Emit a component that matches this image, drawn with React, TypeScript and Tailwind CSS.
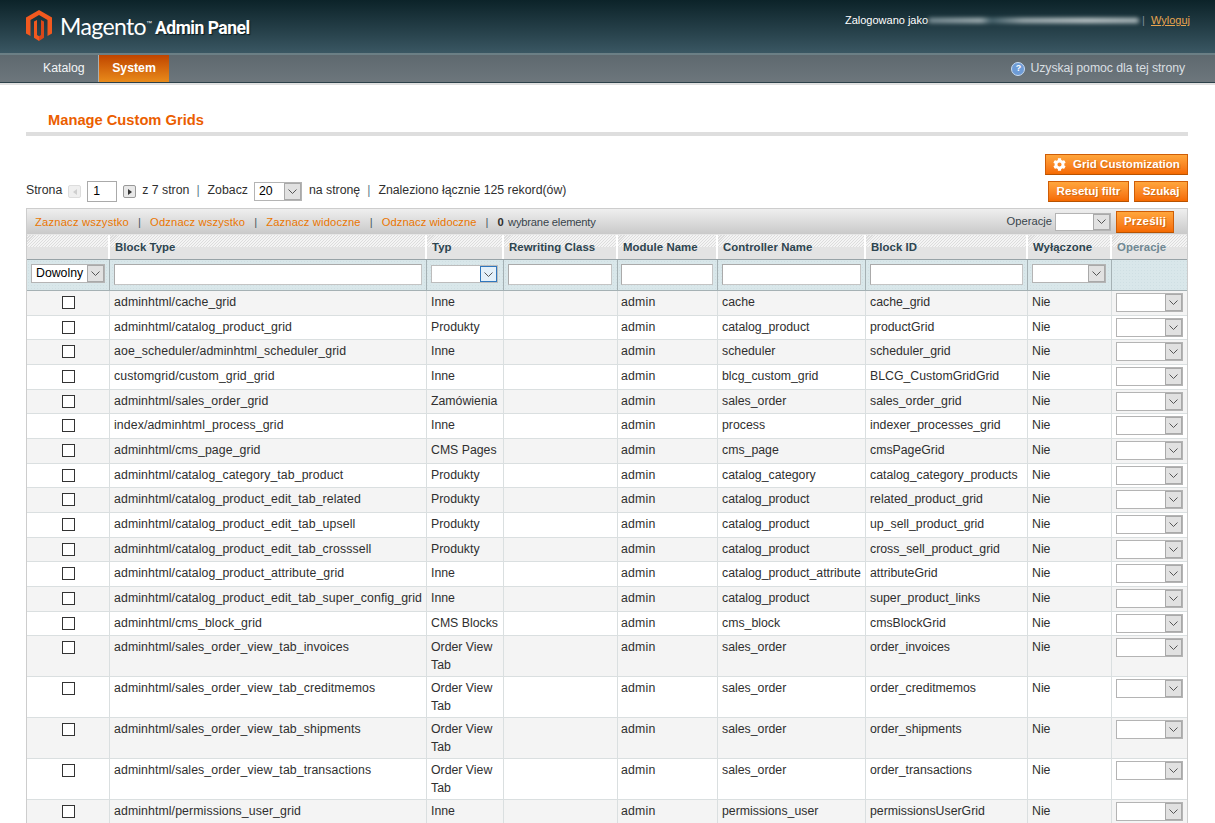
import React from "react";
import { FaCog } from "react-icons/fa";

const COLS = "grid grid-cols-[83px_317px_77px_114px_100px_148px_162px_84px_75px]";

const rows: [string, string, string, string, string][] = [
  ["adminhtml/cache_grid", "Inne", "cache", "cache_grid", "admin"],
  ["adminhtml/catalog_product_grid", "Produkty", "catalog_product", "productGrid", "admin"],
  ["aoe_scheduler/adminhtml_scheduler_grid", "Inne", "scheduler", "scheduler_grid", "admin"],
  ["customgrid/custom_grid_grid", "Inne", "blcg_custom_grid", "BLCG_CustomGridGrid", "admin"],
  ["adminhtml/sales_order_grid", "Zamówienia", "sales_order", "sales_order_grid", "admin"],
  ["index/adminhtml_process_grid", "Inne", "process", "indexer_processes_grid", "admin"],
  ["adminhtml/cms_page_grid", "CMS Pages", "cms_page", "cmsPageGrid", "admin"],
  ["adminhtml/catalog_category_tab_product", "Produkty", "catalog_category", "catalog_category_products", "admin"],
  ["adminhtml/catalog_product_edit_tab_related", "Produkty", "catalog_product", "related_product_grid", "admin"],
  ["adminhtml/catalog_product_edit_tab_upsell", "Produkty", "catalog_product", "up_sell_product_grid", "admin"],
  ["adminhtml/catalog_product_edit_tab_crosssell", "Produkty", "catalog_product", "cross_sell_product_grid", "admin"],
  ["adminhtml/catalog_product_attribute_grid", "Inne", "catalog_product_attribute", "attributeGrid", "admin"],
  ["adminhtml/catalog_product_edit_tab_super_config_grid", "Inne", "catalog_product", "super_product_links", "admin"],
  ["adminhtml/cms_block_grid", "CMS Blocks", "cms_block", "cmsBlockGrid", "admin"],
  ["adminhtml/sales_order_view_tab_invoices", "Order View Tab", "sales_order", "order_invoices", "admin"],
  ["adminhtml/sales_order_view_tab_creditmemos", "Order View Tab", "sales_order", "order_creditmemos", "admin"],
  ["adminhtml/sales_order_view_tab_shipments", "Order View Tab", "sales_order", "order_shipments", "admin"],
  ["adminhtml/sales_order_view_tab_transactions", "Order View Tab", "sales_order", "order_transactions", "admin"],
  ["adminhtml/permissions_user_grid", "Inne", "permissions_user", "permissionsUserGrid", "admin"],
];

function Chevron() {
  return (
    <svg width="9" height="5" viewBox="0 0 9 5" fill="none">
      <path d="M0.5 0.5 L4.5 4.5 L8.5 0.5" stroke="#555" strokeWidth="1" />
    </svg>
  );
}

function Select({ className, value, focus }: { className: string; value?: string; focus?: boolean }) {
  return (
    <div className={`flex bg-white border ${focus ? "border-[#bcbcbc]" : "border-[#b4b4b4]"} ${className}`}>
      <div className="flex-1 min-w-0 pl-[4px] text-[12.3px] text-black flex items-center overflow-hidden">{value}</div>
      <div
        className={
          focus
            ? "w-[17px] shrink-0 flex items-center justify-center bg-[#e4f0f9] border border-[#2f77bd]"
            : "w-[17px] shrink-0 flex items-center justify-center bg-[#e1e1e1] border border-[#a9a9a9]"
        }
      >
        <Chevron />
      </div>
    </div>
  );
}

function Btn({ className, children }: { className: string; children: React.ReactNode }) {
  return (
    <div
      className={`flex items-center justify-center pb-[1px] bg-gradient-to-b from-[#ffa63c] to-[#f56a00] border border-[#cf5d06] border-b-[#b85200] text-white font-bold text-[11.6px] [text-shadow:1px_1px_0_#d66a10] ${className}`}
    >
      {children}
    </div>
  );
}

function Sep() {
  return <span className="text-[#5d7d8c]">|</span>;
}

function HCell({ children, last, muted }: { children?: React.ReactNode; last?: boolean; muted?: boolean }) {
  return (
    <div
      className={`h-full pl-[5px] pt-[1px] flex items-center font-bold text-[11.4px] tracking-[0.05px] ${muted ? "text-[#6f8792]" : "text-[#2d444f]"} ${last ? "" : "border-r-2 border-white"} bg-[#e3e3e3] bg-[repeating-linear-gradient(135deg,#dcdcdc_0,#dcdcdc_0.71px,#f4f4f4_0.71px,#f4f4f4_2.12px)] bg-[length:100%_12px] bg-no-repeat`}
    >
      {children}
    </div>
  );
}

function FCell({ children, last }: { children?: React.ReactNode; last?: boolean }) {
  return <div className={`h-full relative flex items-start ${last ? "" : "border-r border-[#a5b1b4]"}`}>{children}</div>;
}

function Input({ className }: { className: string }) {
  return <div className={`bg-white border border-[#aaaaaa] border-b-[#c4c4c4] border-r-[#c4c4c4] h-[21px] mt-[4px] ${className}`} />;
}

function Row({ r, i }: { r: (typeof rows)[number]; i: number }) {
  const tall = r[1] === "Order View Tab";
  const cell = "h-full border-r border-[#dadfe0] pl-[4px] pt-[2px] text-[12.3px] leading-[18px] text-[#2f2f2f] overflow-hidden";
  return (
    <div className={`${COLS} border-b border-[#dadfe0] ${tall ? "h-[41px]" : "h-[24.67px]"} ${i % 2 === 0 ? "bg-[#f4f4f4]" : "bg-white"}`}>
      <div className="h-full border-r border-[#dadfe0] flex justify-center pt-[5px]">
        <div className="w-[13px] h-[13px] bg-white border border-[#333333]" />
      </div>
      <div className={`${cell} whitespace-nowrap tracking-[0.1px]`}>{r[0]}</div>
      <div className={`${cell} ${tall ? "whitespace-normal" : "whitespace-nowrap"}`}>{r[1]}</div>
      <div className={cell} />
      <div className={`${cell} whitespace-nowrap tracking-[0.2px] !pl-[3px]`}>{r[4]}</div>
      <div className={`${cell} whitespace-nowrap`}>{r[2]}</div>
      <div className={`${cell} whitespace-nowrap`}>{r[3]}</div>
      <div className={`${cell} whitespace-nowrap`}>Nie</div>
      <div className="h-full pl-[4px] pt-[2px]">
        <Select className="w-[67px] h-[19px]" />
      </div>
    </div>
  );
}

export default function App() {
  return (
    <div className="h-screen overflow-hidden bg-white font-['Liberation_Sans',Arial,sans-serif] text-[12.3px] text-[#2f2f2f]">
      {/* header */}
      <div className="h-[53px] bg-gradient-to-b from-[#0c2329] to-[#3a5763] relative flex items-start pl-[26px] pr-[25px]">
        <svg className="mt-[10px] shrink-0" width="26" height="31" viewBox="0 0 26 31">
          <path d="M13 0 L26 7.5 V23.5 L21.5 26 V10 L13 5 L4.5 10 V26 L0 23.5 V7.5 Z" fill="#f2591f" />
          <path d="M8 11.5 L11 10 V25 L13 26.3 V31 L8 27.8 Z" fill="#f2591f" />
          <path d="M18 11.5 L15 10 V25 L13 26.3 V31 L18 27.8 Z" fill="#d9471a" />
        </svg>
        <div className="ml-[8px] mt-[10px] text-white font-['Lato',sans-serif] font-normal text-[23px] leading-[32px] tracking-[-0.6px]">Magento</div>
        <div className="text-white text-[6px] mt-[20px] leading-none">™</div>
        <div className="ml-[3px] mt-[16px] text-white font-['Roboto',sans-serif] font-bold text-[17.5px] leading-[24px] tracking-[-0.5px] [text-shadow:1px_1px_1px_#0a1a1f] whitespace-nowrap">Admin Panel</div>
        <div className="ml-auto mt-[14px] flex items-center text-[11px] leading-[13px] text-white whitespace-nowrap">
          <span>Zalogowano jako</span>
          <div className="w-[211px] h-[5px] rounded-full blur-[2px] bg-[linear-gradient(90deg,#7f939a,#aebbbf_25%,#4a6670_30%,#a9b6ba_45%,#ccd4d6_75%,#b4c0c3)]" />
          <span className="text-[#7f9098] ml-[3px] mr-[6px]">|</span>
          <span className="text-[#e9a54f] underline">Wyloguj</span>
        </div>
      </div>
      {/* nav */}
      <div className="h-[2px] bg-[#6b7f85]" />
      <div className="h-[27px] bg-gradient-to-b from-[#5e696f] to-[#6d767c] flex items-stretch pl-[43px] pr-[30px]">
        <div className="w-[56px] flex items-center text-[#f2f4f5] text-[12.3px] border-r border-[#a9b0b3]">Katalog</div>
        <div className="w-[70px] flex items-center justify-center text-white font-bold bg-gradient-to-b from-[#bf4400] to-[#e98a1a]">System</div>
        <div className="ml-auto flex items-center text-[#d9dfe2] tracking-[-0.07px]">
          <div className="w-[14px] h-[14px] rounded-full bg-[#6d9bd6] border border-[#c9dcf2] text-white text-[9px] font-bold flex items-center justify-center mr-[5px]">?</div>
          <span>Uzyskaj pomoc dla tej strony</span>
        </div>
      </div>
      <div className="h-[1px] bg-[#2c4049]" />
      <div className="h-[2px] bg-[#e0e0e0]" />

      {/* content */}
      <div className="pl-[26px] pr-[27px]">
        <div className="h-[51px] pt-[27px] border-b-[4px] border-[#dedede] pl-[22px] font-bold text-[14.7px] leading-[17px] text-[#eb5e00]">
          Manage Custom Grids
        </div>
        <div className="flex justify-end mt-[18px]">
          <Btn className="w-[143px] h-[21px]">
            <FaCog className="text-white text-[13px] mr-[7px]" />
            Grid Customization
          </Btn>
        </div>
        <div className="flex items-center mt-[6px] h-[21px] text-[12.3px] whitespace-nowrap">
          <span className="-mt-[2px]">Strona</span>
          <div className="ml-[6px] w-[13px] h-[13px] bg-[#efefef] border border-[#dddddd] rounded-[2px] flex items-center justify-center">
            <div className="w-0 h-0 border-y-[3px] border-y-transparent border-r-[4px] border-r-[#cfcfcf]" />
          </div>
          <div className="ml-[6px] w-[30px] h-[21px] border border-[#aaaaaa] pl-[5px] flex items-center text-black">1</div>
          <div className="ml-[6px] w-[13px] h-[13px] bg-[#e8e8e8] border border-[#999999] rounded-[2px] flex items-center justify-center">
            <div className="w-0 h-0 border-y-[3px] border-y-transparent border-l-[4px] border-l-[#333333]" />
          </div>
          <span className="ml-[6px] -mt-[2px]">z 7 stron</span>
          <span className="ml-[7px] -mt-[2px]"><Sep /></span>
          <span className="ml-[8px] -mt-[2px]">Zobacz</span>
          <Select className="ml-[6px] w-[48px] h-[19px] border-[#aaaaaa]" value="20" />
          <span className="ml-[7px] -mt-[2px]">na stronę</span>
          <span className="ml-[7px] -mt-[2px]"><Sep /></span>
          <span className="ml-[8px] -mt-[2px]">Znaleziono łącznie 125 rekord(ów)</span>
          <Btn className="ml-auto w-[81px] h-[21px]">Resetuj filtr</Btn>
          <Btn className="ml-[5px] w-[54px] h-[21px]">Szukaj</Btn>
        </div>

        {/* grid */}
        <div className="mt-[6px] border border-[#cdcdcd] border-b-0">
          <div className="h-[26px] bg-gradient-to-b from-[#efefef] to-[#c9c9c9] flex items-center pl-[8px] pr-[13px] text-[11.2px] tracking-[0.2px] whitespace-nowrap border-b border-[#e6e6e6]">
            <span className="text-[#ea7601] pt-[2px]">Zaznacz wszystko</span>
            <span className="mx-[9px] text-[#4a5a63] pt-[2px]">|</span>
            <span className="text-[#ea7601] pt-[2px] tracking-[0.15px]">Odznacz wszystko</span>
            <span className="mx-[9px] text-[#4a5a63] pt-[2px]">|</span>
            <span className="text-[#ea7601] pt-[2px] tracking-[0.15px]">Zaznacz widoczne</span>
            <span className="mx-[9px] text-[#4a5a63] pt-[2px]">|</span>
            <span className="text-[#ea7601] pt-[2px] tracking-[0.05px]">Odznacz widoczne</span>
            <span className="mx-[9px] text-[#4a5a63] pt-[2px]">|</span>
            <span className="font-bold mr-[4px] pt-[2px]">0</span>
            <span className="text-[#38444b] tracking-[-0.2px] pt-[2px]">wybrane elementy</span>
            <span className="ml-auto text-[#38444b] tracking-[0px]">Operacje</span>
            <Select className="ml-[3px] w-[56px] h-[18px]" />
            <Btn className="ml-[5px] w-[58px] h-[22px]">Prześlij</Btn>
          </div>
          <div className={`${COLS} h-[25px] border-b border-[#98a3a7]`}>
            <HCell />
            <HCell>Block Type</HCell>
            <HCell>Typ</HCell>
            <HCell>Rewriting Class</HCell>
            <HCell>Module Name</HCell>
            <HCell>Controller Name</HCell>
            <HCell>Block ID</HCell>
            <HCell>Wyłączone</HCell>
            <HCell last muted>Operacje</HCell>
          </div>
          <div className={`${COLS} h-[31px] border-b border-[#a5b1b4] bg-[#d9e7ea] bg-[radial-gradient(#cfdfe3_1px,transparent_1px)] bg-[length:3px_3px]`}>
            <FCell><Select className="mt-[4px] ml-[4px] w-[74px] h-[19px] border-[#aaaaaa]" value="Dowolny" /></FCell>
            <FCell><Input className="ml-[4px] w-[308px]" /></FCell>
            <FCell><Select className="mt-[5px] ml-[4px] w-[67px] h-[18px]" focus /></FCell>
            <FCell><Input className="ml-[4px] w-[104px]" /></FCell>
            <FCell><Input className="ml-[3px] w-[92px]" /></FCell>
            <FCell><Input className="ml-[4px] w-[139px]" /></FCell>
            <FCell><Input className="ml-[4px] w-[153px]" /></FCell>
            <FCell><Select className="mt-[4px] ml-[4px] w-[74px] h-[19px]" /></FCell>
            <FCell last />
          </div>
          {rows.map((r, i) => (
            <Row key={r[0]} r={r} i={i} />
          ))}
        </div>
      </div>
    </div>
  );
}
